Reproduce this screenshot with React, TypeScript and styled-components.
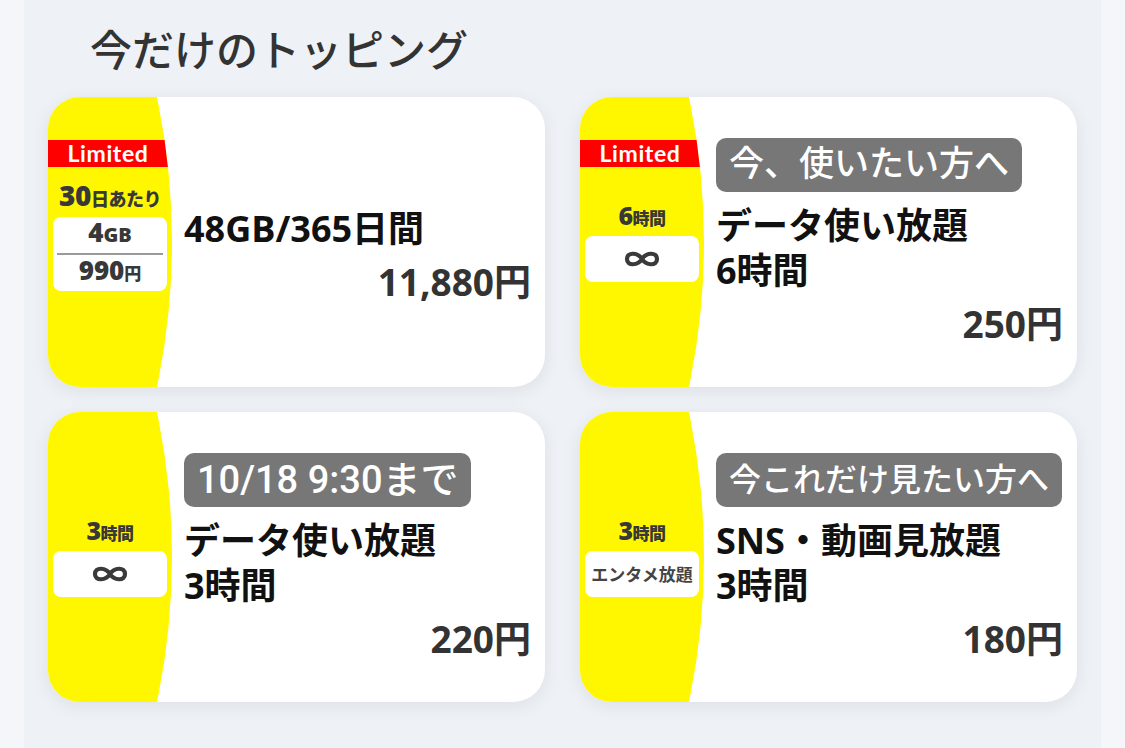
import styled, { createGlobalStyle } from "styled-components";

const GlobalStyle = createGlobalStyle`
  html, body {
    margin: 0;
    background: #f4f6f9;
  }
  body {
    font-family: "Open Sans", "Noto Sans CJK JP", sans-serif;
    overflow: hidden;
  }
`;

const Panel = styled.main`
  margin: 0 24px;
  min-height: 748px;
  box-sizing: border-box;
  padding: 18px 24px 0;
  background: #eef1f5;
`;

const Heading = styled.h2`
  margin: 0 0 20px 42px;
  font: 500 42px/59px "Noto Sans CJK JP", sans-serif;
  color: #333;
`;

const Grid = styled.div`
  display: grid;
  grid-template-columns: 497px 497px;
  column-gap: 35px;
  row-gap: 25px;
`;

const Card = styled.div`
  display: flex;
  height: 290px;
  background: #fff;
  border-radius: 32px;
  overflow: hidden;
  box-shadow: 0 4px 18px rgba(30, 40, 70, 0.08);
`;

const Side = styled.div<{ $lift?: number }>`
  position: relative;
  flex: 0 0 124px;
  box-sizing: border-box;
  padding: 0 5px ${(p) => p.$lift || 0}px;
  background: #fff700;
  clip-path: circle(708px at -584px 50%);
  display: flex;
  flex-direction: column;
  align-items: center;
  justify-content: center;
  color: #383838;
  font-family: "Open Sans", "Noto Sans CJK JP", sans-serif;
  font-weight: 800;
`;

const LimitedBar = styled.div`
  position: absolute;
  top: 43px;
  left: 0;
  right: 0;
  height: 27px;
  background: #ff0000;
  color: #fff;
  font: 700 23px/27px "Lato", sans-serif;
  letter-spacing: 0.6px;
  text-align: center;
  padding-right: 4px;
`;

const SideHead = styled.div<{ $big?: boolean }>`
  font-size: ${(p) => (p.$big ? 18 : 17)}px;
  line-height: 26px;
  margin-bottom: ${(p) => (p.$big ? 5 : 4)}px;
  white-space: nowrap;
  letter-spacing: -0.5px;
  span {
    font-size: ${(p) => (p.$big ? 28 : 25)}px;
    line-height: 1;
  }
`;

const SideBox = styled.div<{ $h: number }>`
  width: 114px;
  height: ${(p) => p.$h}px;
  box-sizing: border-box;
  padding: 0 4px;
  background: #fff;
  border-radius: 8px;
  display: flex;
  flex-direction: column;
  justify-content: center;
  align-items: stretch;
  text-align: center;
`;

const BoxRow = styled.div`
  height: 36px;
  font-size: 20px;
  line-height: 36px;
  span {
    font-size: 26px;
    line-height: 1;
  }
  small {
    font-size: 17px;
    line-height: 1;
  }
`;

const BoxRule = styled.div`
  flex: 0 0 2px;
  background: #9a9a9a;
`;

const InfinityIcon = styled.svg`
  display: block;
  margin: 0 auto;
`;

const SmallLabel = styled.div`
  font: 700 17px/46px "Noto Sans CJK JP", sans-serif;
  color: #444;
`;

const Main = styled.div<{ $offset?: number }>`
  flex: 1;
  min-width: 0;
  display: flex;
  flex-direction: column;
  justify-content: center;
  align-items: flex-start;
  padding: ${(p) => p.$offset || 0}px 14px 0 12px;
`;

const Tag = styled.div<{ $size: number }>`
  background: #777;
  color: #fff;
  font-family: "Roboto", "Noto Sans CJK JP", sans-serif;
  font-size: ${(p) => p.$size}px;
  font-weight: 500;
  line-height: 54px;
  padding: 0 13px;
  border-radius: 10px;
  margin-bottom: 11px;
  white-space: nowrap;
`;

const Title = styled.div`
  font-size: 36px;
  font-weight: 700;
  line-height: 45px;
  color: #111;
  white-space: pre-line;
`;

const Price = styled.div`
  align-self: stretch;
  margin-top: 8px;
  text-align: right;
  font-size: 37px;
  font-weight: 700;
  line-height: 45px;
  color: #333;
`;

type Item = {
  limited?: boolean;
  hours?: string;
  label?: string;
  tag?: string;
  tagSize?: number;
  title: string;
  price: string;
  offset?: number;
  special?: boolean;
};

const items: Item[] = [
  { limited: true, special: true, title: "48GB/365日間", price: "11,880円", offset: 26 },
  {
    limited: true,
    hours: "6",
    tag: "今、使いたい方へ",
    tagSize: 35,
    title: "データ使い放題\n6時間",
    price: "250円",
  },
  { hours: "3", tag: "10/18 9:30まで", tagSize: 38, title: "データ使い放題\n3時間", price: "220円" },
  {
    hours: "3",
    label: "エンタメ放題",
    tag: "今これだけ見たい方へ",
    tagSize: 32,
    title: "SNS・動画見放題\n3時間",
    price: "180円",
  },
];

function SideContent({ item }: { item: Item }) {
  if (item.special) {
    return (
      <>
        <SideHead $big>
          <span>30</span>日あたり
        </SideHead>
        <SideBox $h={74}>
          <BoxRow>
            <span>4</span>GB
          </BoxRow>
          <BoxRule />
          <BoxRow>
            <span>990</span>
            <small>円</small>
          </BoxRow>
        </SideBox>
      </>
    );
  }
  return (
    <>
      <SideHead>
        <span>{item.hours}</span>時間
      </SideHead>
      <SideBox $h={46}>
        {item.label ? (
          <SmallLabel>{item.label}</SmallLabel>
        ) : (
          <InfinityIcon width="36" height="20" viewBox="0 0 36 20">
            <path
              d="M18 10 C14 3.5 3 2.5 3 10 C3 17.5 14 16.5 18 10 C22 3.5 33 2.5 33 10 C33 17.5 22 16.5 18 10 Z"
              fill="none"
              stroke="#3a3a3a"
              strokeWidth="4.2"
            />
          </InfinityIcon>
        )}
      </SideBox>
    </>
  );
}

export default function App() {
  return (
    <>
      <GlobalStyle />
      <Panel>
        <Heading>今だけのトッピング</Heading>
        <Grid>
          {items.map((item, i) => (
            <Card key={i}>
              <Side $lift={item.special ? 12 : 0}>
                {item.limited && <LimitedBar>Limited</LimitedBar>}
                <SideContent item={item} />
              </Side>
              <Main $offset={item.offset}>
                {item.tag && <Tag $size={item.tagSize || 34}>{item.tag}</Tag>}
                <Title>{item.title}</Title>
                <Price>{item.price}</Price>
              </Main>
            </Card>
          ))}
        </Grid>
      </Panel>
    </>
  );
}
